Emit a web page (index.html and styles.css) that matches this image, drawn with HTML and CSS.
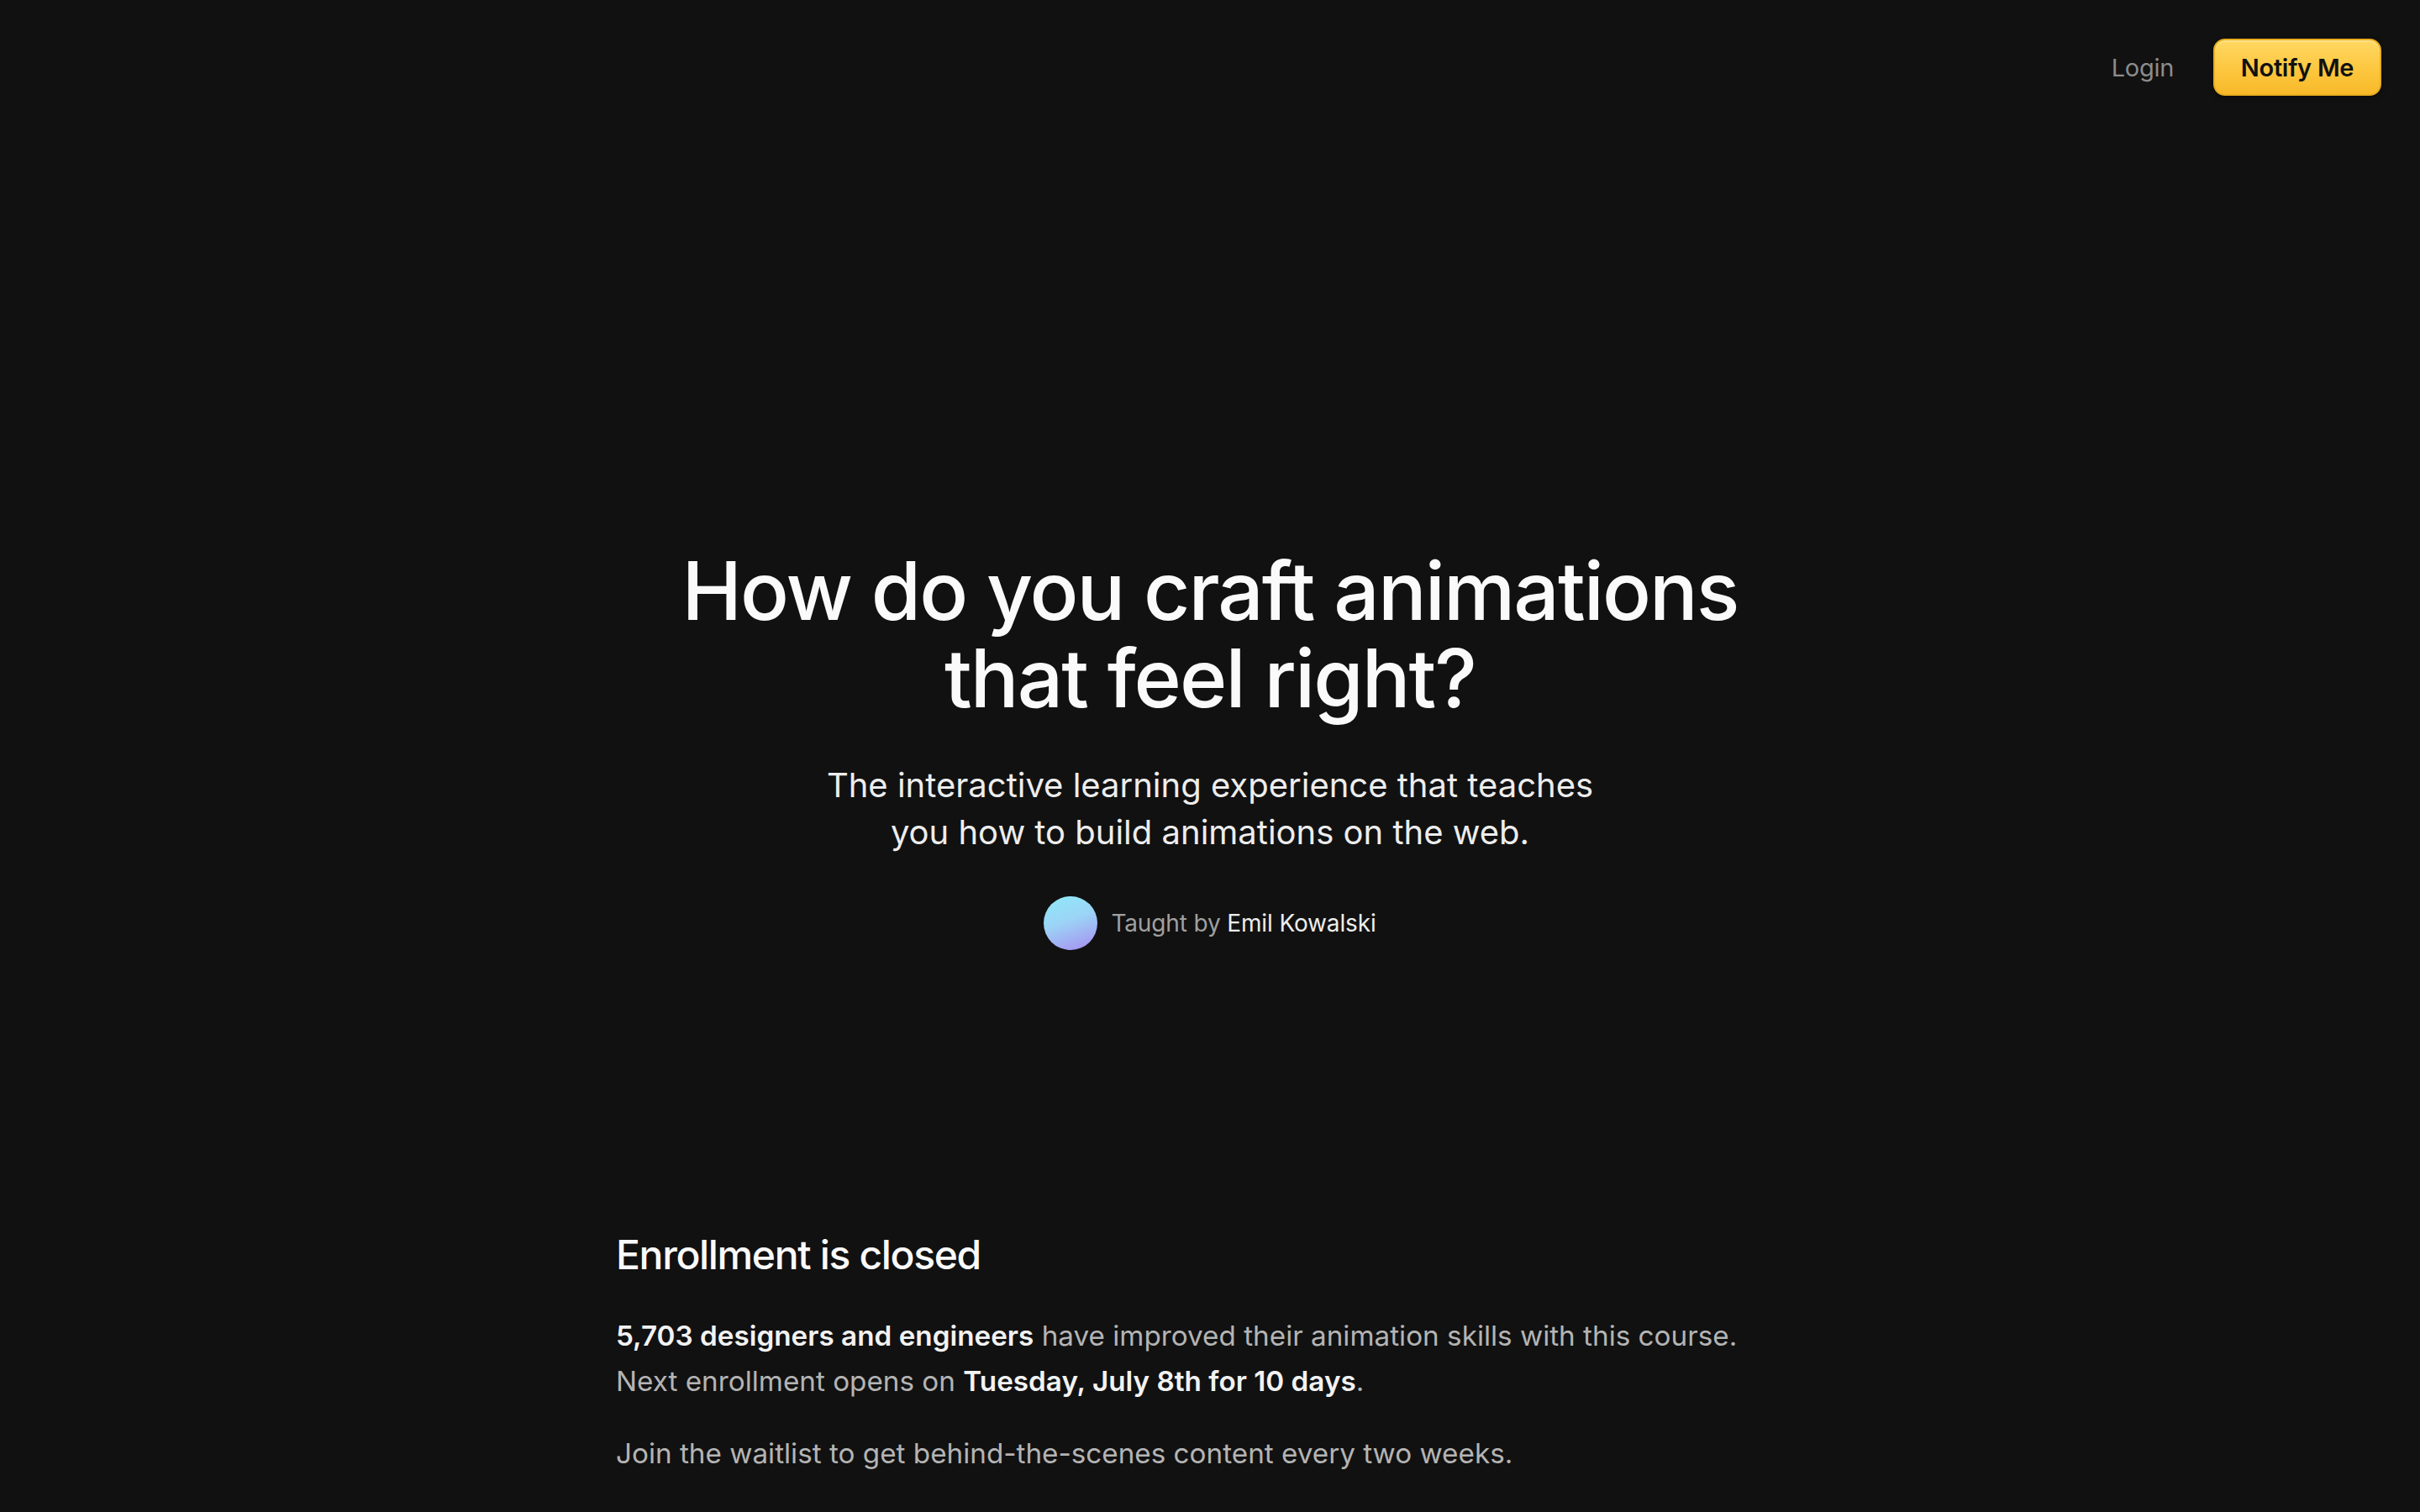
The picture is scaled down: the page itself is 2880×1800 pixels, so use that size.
FILE: index.html
```html
<!DOCTYPE html>
<html lang="en">
<head>
<meta charset="utf-8">
<title>Animations on the Web</title>
<link rel="stylesheet" href="styles.css">
</head>
<body>
<header class="topbar">
  <a class="login" href="#">Login</a>
  <a class="notify" href="#">Notify Me</a>
</header>
<main>
  <section class="hero">
    <h1 class="hero-title"><span class="line">How do you craft animations</span><span class="line">that feel right?</span></h1>
    <p class="hero-sub">The interactive learning experience that teaches<br>you how to build animations on the web.</p>
    <div class="author">
      <span class="avatar"></span>
      <span class="author-text">Taught by <span class="author-name">Emil Kowalski</span></span>
    </div>
  </section>
  <section class="enroll">
    <h2 class="enroll-title">Enrollment is closed</h2>
    <p class="enroll-text"><strong>5,703 designers and engineers</strong> have improved their animation skills with this course.<br>Next enrollment opens on <strong>Tuesday, July 8th for 10 days</strong>.</p>
    <p class="enroll-text">Join the waitlist to get behind-the-scenes content every two weeks.</p>
  </section>
</main>
</body>
</html>
```
FILE: styles.css
```css
html, body {
  margin: 0;
  padding: 0;
  background: #111111;
  height: 100%;
  overflow: hidden;
}
body {
  font-family: Inter, "Noto Sans", sans-serif;
  color: #ededed;
  -webkit-font-smoothing: antialiased;
}
a { text-decoration: none; }

.topbar {
  display: flex;
  justify-content: flex-end;
  align-items: center;
  gap: 47px;
  padding: 46px 46px 0;
  height: 68px;
}
.login {
  font-size: 29px;
  color: #8c8c8c;
  letter-spacing: -0.01em;
}
.notify {
  display: flex;
  align-items: center;
  justify-content: center;
  box-sizing: border-box;
  width: 200px;
  height: 68px;
  border-radius: 14px;
  border: 2px solid #e8ad1f;
  background: linear-gradient(180deg, #ffd862 0%, #fcc53c 60%, #f8b92a 100%);
  box-shadow: inset 0 2px 0 rgba(255,255,255,0.25), 0 2px 6px rgba(0,0,0,0.4);
  color: #111111;
  font-size: 29px;
  font-weight: 600;
  letter-spacing: -0.01em;
}

.hero {
  display: flex;
  flex-direction: column;
  align-items: center;
  gap: 48px;
  padding-top: 537px;
  text-align: center;
}
.hero-title {
  margin: 0;
  display: flex;
  flex-direction: column;
  align-items: center;
  font-size: 96px;
  line-height: 104px;
  font-weight: 500;
  letter-spacing: -0.02em;
  color: #fafafa;
}
.hero-title .line {
  display: block;
  height: 104px;
  line-height: 104px;
}
.hero-sub {
  margin: 0;
  font-size: 40px;
  line-height: 56px;
  font-weight: 400;
  color: #ededed;
  letter-spacing: 0;
}
.author {
  display: flex;
  align-items: center;
  gap: 16px;
}
.avatar {
  width: 64px;
  height: 64px;
  border-radius: 50%;
  background: linear-gradient(160deg, #8fe9f9 0%, #9cd4f6 45%, #a78cf0 100%);
}
.author-text {
  font-size: 28px;
  color: #a0a0a0;
  letter-spacing: -0.005em;
}
.author-name {
  color: #ededed;
}

.enroll {
  width: 1414px;
  margin: 332px auto 0;
}
.enroll-title {
  margin: 0 0 38px;
  font-size: 48px;
  line-height: 62px;
  font-weight: 500;
  letter-spacing: -0.028em;
  color: #fafafa;
}
.enroll-text {
  margin: 0 0 32px;
  font-size: 33.25px;
  line-height: 54px;
  color: #b4b4b4;
  letter-spacing: 0;
}
.enroll-text strong {
  font-weight: 600;
  color: #f2f2f2;
}
```
